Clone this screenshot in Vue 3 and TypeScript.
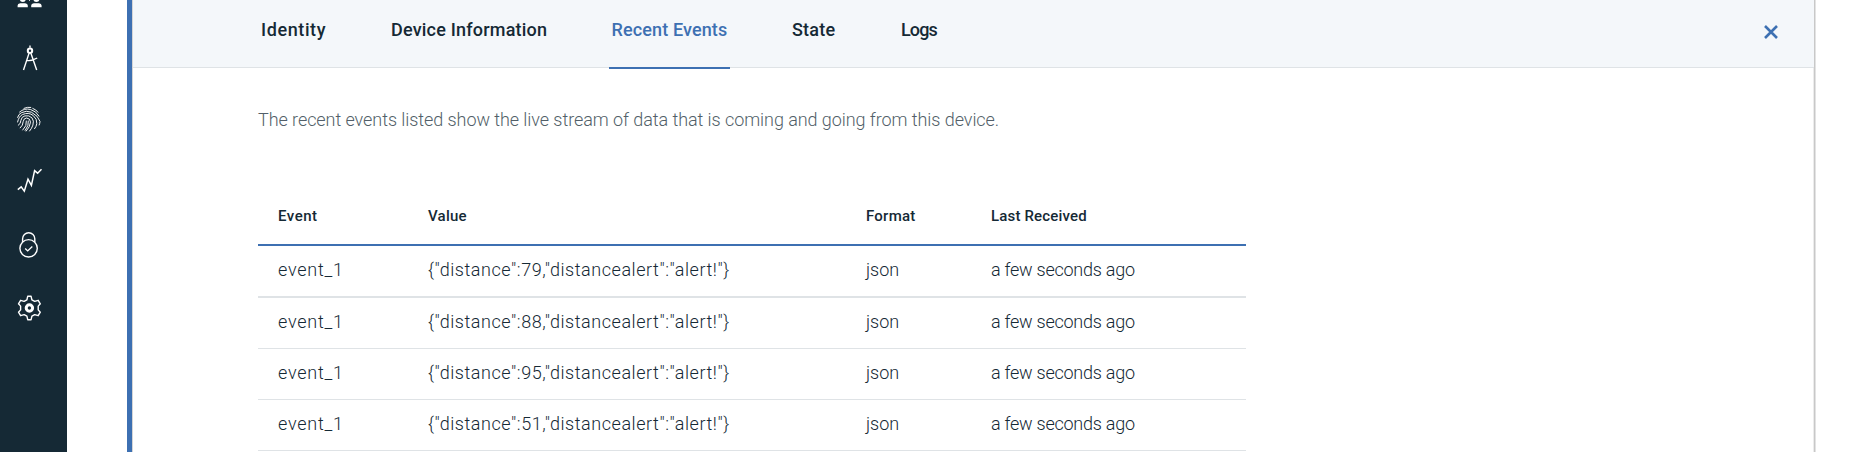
<script setup lang="ts">
interface Tab { id: string; label: string }
interface DeviceEvent { name: string; value: string; format: string; received: string }

const activeTab = 'events'
const tabs: Tab[] = [
  { id: 'identity', label: 'Identity' },
  { id: 'info', label: 'Device Information' },
  { id: 'events', label: 'Recent Events' },
  { id: 'state', label: 'State' },
  { id: 'logs', label: 'Logs' },
]
const events: DeviceEvent[] = [79, 88, 95, 51].map((distance) => ({
  name: 'event_1',
  value: JSON.stringify({ distance, distancealert: 'alert!' }),
  format: 'json',
  received: 'a few seconds ago',
}))
</script>

<template>
  <div class="page">
    <nav class="sidebar">
      <svg class="first" viewBox="0 0 67 27">
        <g fill="#fff">
          <path d="M17.6 7.2V5.4q0-2 2.6-2.2h5q2.6.2 2.6 2.2v1.8zM31.2 7.2V5.4q0-2 2.6-2.2h5.2q2.6.2 2.6 2.2v1.8z" />
          <circle cx="22.8" cy="-1.2" r="3.1" /><circle cx="36.4" cy="-1.2" r="3.1" />
          <path d="M29.2 0h.8v1h-.8z" />
        </g>
      </svg>
      <svg viewBox="0 27 67 63">
        <g fill="none" stroke="#fff" stroke-width="1.4">
          <path d="M30 45.6v2.2" />
          <circle cx="30" cy="50.7" r="2.2" stroke-width="2" />
          <path d="M29 53.4 23.5 70M31 53.4 36.7 70M26.6 60.4q5 .9 10.6-2.4" />
        </g>
      </svg>
      <svg viewBox="0 90 67 63">
        <g fill="none" stroke="#fff" stroke-width=".95" stroke-linecap="round">
          <path d="M24 108.3q3.4-1.5 6.8-.9M19.6 112q4.8-4.2 11-2.5 5.6 1.6 8.4 6.6" />
          <path d="M17.6 117.4q1-3.4 3.6-4.6 5-2.8 10.2-.6 6.9 3.6 8.6 9.2-.1 2-.8 3.6" />
          <path d="M17.6 122q1.2-5.7 5-7.5 6-2.6 10.6 1 4.2 3.6 3.6 8.2-.4 2.7-2.2 5" />
          <path d="M18.3 125.3q2.5-1.5 2.6-4.9.6-3.8 4-4.5 4.3-1 7.1 2 2.3 3 .9 7.2-1.1 3.3-3.3 5.9" />
          <path d="M20.2 127.9q2.9-2.4 3-6.4.6-3.5 3.4-3.5 3.6.2 3.9 4.1-.3 4.7-4.3 9" />
          <path d="M22.8 130q4.4-4.2 3.6-9M28.4 121q.7 4.6-3.2 9.4M32.8 108.4q3.4 1.2 5.2 3.8" />
        </g>
      </svg>
      <svg viewBox="0 153 67 63">
        <path d="M17.8 189.6 21.2 186.9 24.3 191.2 28 179.2 31.4 185.4 34.6 170.7 37.6 173.2 41.5 169.3" fill="none" stroke="#fff" stroke-width="1.5" />
      </svg>
      <svg viewBox="0 216 67 63">
        <g fill="none" stroke="#fff" stroke-width="1.4">
          <circle cx="28.6" cy="248.3" r="8.7" />
          <path d="M22.6 242v-3.2a6.1 6.1 0 0 1 12.2 0v3.2M25.2 248.5l2.5 2.4 4.6-4.4" />
        </g>
      </svg>
      <svg viewBox="0 279 67 63">
        <g fill="none" stroke="#fff" stroke-linejoin="round">
          <circle cx="29.4" cy="308" r="3.2" stroke-width="3" />
          <path stroke-width="1.4" d="M27.7 296.3h3.4l.8 3.5 2.8 1.6 3.5-1.1 2.1 3.5-2.1 2.3v3.8l2.1 2.3-2.1 3.5-3.5-1.1-2.8 1.6-.8 3.5h-3.4l-.8-3.5-2.8-1.6-3.5 1.1-2.1-3.5 2.1-2.3v-3.8l-2.1-2.3 2.1-3.5 3.5 1.1 2.8-1.6z" />
        </g>
      </svg>
    </nav>

    <main class="panel">
      <header class="head">
        <ul class="tabs">
          <li v-for="tab in tabs" :key="tab.id" :class="['tab', tab.id, { active: tab.id === activeTab }]">{{ tab.label }}</li>
        </ul>
        <svg class="close" viewBox="0 0 16 16"><path d="M2 2l12 12M14 2 2 14" /></svg>
      </header>
      <section class="body">
        <p class="intro">The recent events listed show the live stream of data that is coming and going from this device.</p>
        <table>
          <thead>
            <tr>
              <th class="c-name">Event</th>
              <th class="c-value">Value</th>
              <th class="c-format">Format</th>
              <th class="c-received">Last Received</th>
            </tr>
          </thead>
          <tbody>
            <tr v-for="(event, i) in events" :key="i">
              <td class="c-name">{{ event.name }}</td>
              <td class="c-value">{{ event.value }}</td>
              <td class="c-format">{{ event.format }}</td>
              <td class="c-received">{{ event.received }}</td>
            </tr>
          </tbody>
        </table>
      </section>
    </main>
  </div>
</template>

<style>
body { margin: 0; background: #fff; overflow: hidden; }
</style>

<style scoped>
.page { display: flex; width: 1872px; height: 452px; overflow: hidden; font-family: Roboto, "Open Sans", sans-serif; color: #152935; }
.sidebar { display: flex; flex-direction: column; flex: none; width: 67px; background: #152935; }
.sidebar svg { flex: none; width: 67px; height: 63px; }
.sidebar svg.first { height: 27px; }
.panel { box-sizing: border-box; width: 1688px; height: 452px; margin-left: 60px; border-left: 5px solid #3d70b2; border-right: 1px solid #c8c8c8; box-shadow: 1px 0 0 #e3e3e3, inset 1px 0 0 #d5d5d5, inset -1px 0 0 #ececec; }
.head { display: flex; box-sizing: border-box; height: 68px; margin-left: 1px; padding: 0 35px 0 126px; background: #f4f7fa; border-bottom: 1px solid #dfe3e6; }
.tabs { display: flex; margin: 0; padding: 0; list-style: none; }
.tab { box-sizing: border-box; height: 69px; padding: 19px 0 0 2px; font-size: 18px; line-height: 21px; font-weight: 500; white-space: nowrap; letter-spacing: .2px; }
.identity { width: 130px; letter-spacing: .6px; }
.info { width: 220px; }
.events { width: 121px; margin-right: 60px; padding-left: 2.5px; letter-spacing: .13px; }
.state { width: 109px; }
.logs { letter-spacing: -.85px; }
.active { color: #3d70b2; border-bottom: 2px solid #3d70b2; }
.close { width: 16px; height: 16px; margin: 24px 0 0 auto; fill: none; stroke: #3d70b2; stroke-width: 2.6; }
.body { padding: 40px 0 0 126px; }
.intro { margin: 0; height: 80px; font-size: 18px; line-height: 24px; font-weight: 300; color: #525f69; letter-spacing: -.065px; white-space: nowrap; }
table { width: 988px; table-layout: fixed; border-collapse: separate; border-spacing: 0; }
th, td { box-sizing: border-box; padding: 0 0 3px 20px; text-align: left; white-space: nowrap; }
th { height: 58px; font-size: 15px; font-weight: 500; line-height: 20px; letter-spacing: .25px; padding-bottom: 1px; border-bottom: 2px solid #3d70b2; }
td { height: 51px; font-size: 18px; font-weight: 300; line-height: 24px; border-bottom: 1px solid #dfe3e6; }
tbody tr:first-child td { height: 52px; border-bottom-width: 2px; }
.c-name { width: 150px; }
.c-value { width: 438px; }
.c-format { width: 125px; }
th.c-name { letter-spacing: .5px; }
td.c-name { letter-spacing: .75px; }
td.c-value { letter-spacing: .55px; }
td.c-received { letter-spacing: -.25px; }
th.c-received { letter-spacing: .17px; }
</style>
